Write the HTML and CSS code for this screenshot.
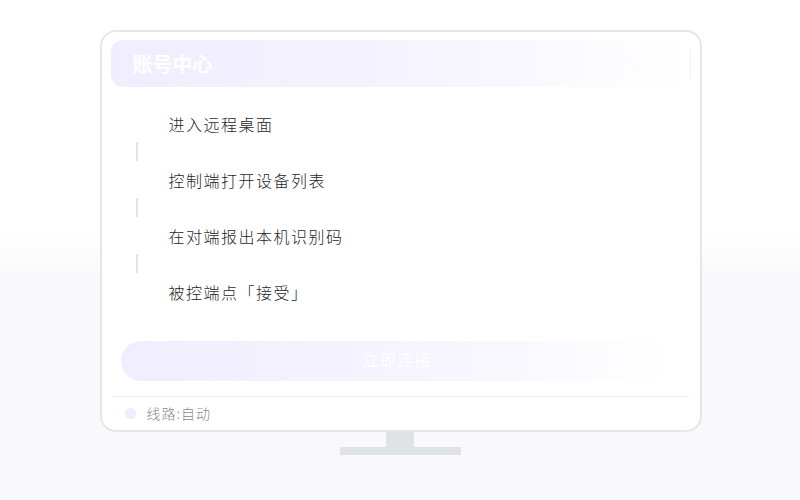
FILE: index.html
```html
<!DOCTYPE html>
<html>
<head>
<meta charset="utf-8">
<title>账号中心</title>
<link rel="stylesheet" href="styles.css">
</head>
<body>

<div class="stage">
	<div class="screen">
		<div class="head">
			<h1 class="head-title">账号中心</h1>
			<div class="head-more">
				<span></span><span></span><span></span>
			</div>
			<div class="head-bar"></div>
		</div>

		<ul class="steps">
			<li class="step">进入远程桌面</li>
			<li class="step-line"></li>
			<li class="step">控制端打开设备列表</li>
			<li class="step-line"></li>
			<li class="step">在对端报出本机识别码</li>
			<li class="step-line"></li>
			<li class="step">被控端点「接受」</li>
		</ul>

		<div class="btn">立即连接</div>

		<div class="foot">
			<span class="foot-dot"></span>
			<span class="foot-text">线路:自动</span>
		</div>
	</div>
	<div class="neck"></div>
	<div class="base"></div>
</div>

</body>
</html>
```

FILE: styles.css
```css
* {
	margin: 0;
	padding: 0;
	box-sizing: border-box;
}
html, body {
	height: 100%;
}
body {
	font-family: "Noto Sans CJK SC", "Noto Sans", sans-serif;
	background: linear-gradient(#fff 0, #fff 235px, #f9f9fb 275px, #f9f9fb 100%);
	color: #333;
}
.stage {
	display: flex;
	flex-direction: column;
	align-items: center;
	padding-top: 30px;
}
.screen {
	width: 602px;
	height: 402px;
	margin-left: 1px;
	border: 2px solid #e3e6ec;
	border-radius: 16px;
	background: #fff;
	padding: 8px 9px 0;
	display: flex;
	flex-direction: column;
}

/* header */
.head {
	height: 47px;
	border-radius: 12px;
	background: linear-gradient(90deg, #f0eefe 0%, #f5f3fe 50%, rgba(255,255,255,0) 100%);
	display: flex;
	align-items: center;
	padding-left: 22px;
}
.head-title {
	flex: 1;
	font-size: 20px;
	font-weight: bold;
	color: #fff;
}
.head-more {
	display: flex;
	gap: 6px;
	margin-right: 36px;
}
.head-more span {
	width: 7px;
	height: 7px;
	border-radius: 50%;
	background: #fff;
	box-shadow: 0 0 1px rgba(220,220,235,0.6);
}
.head-bar {
	width: 1px;
	height: 30px;
	background: #f0f1f4;
}

/* steps */
.steps {
	list-style: none;
	padding: 25px 0 0 58px;
}
.step {
	height: 24px;
	line-height: 24px;
	font-size: 16px;
	font-weight: 300;
	letter-spacing: 1.5px;
	color: #1f1f1f;
}
.step-line {
	width: 2px;
	height: 19px;
	margin: 6px 0 7px -33px;
	background: #e1e3e8;
}

/* button */
.btn {
	height: 40px;
	margin: 37px 20px 0 10px;
	border-radius: 20px;
	background: linear-gradient(90deg, #f0eefe 0%, #f6f4fe 55%, rgba(255,255,255,0) 100%);
	color: #fff;
	font-size: 16px;
	letter-spacing: 1.2px;
	line-height: 36px;
	text-align: center;
	padding-left: 3px;
}

/* footer */
.foot {
	margin: 15px 2px 0 1px;
	border-top: 1px solid #eceef2;
	display: flex;
	align-items: center;
	height: 33px;
	padding-left: 13px;
}
.foot-dot {
	width: 11px;
	height: 11px;
	border-radius: 50%;
	background: #eeecfd;
	margin-right: 11px;
}
.foot-text {
	font-size: 14px;
	font-weight: 300;
	letter-spacing: 1px;
	color: #8a8a8a;
}

/* stand */
.neck {
	width: 28px;
	height: 15px;
	background: #dfe2e7;
}
.base {
	width: 121px;
	height: 8px;
	background: #dfe2e7;
}
```
